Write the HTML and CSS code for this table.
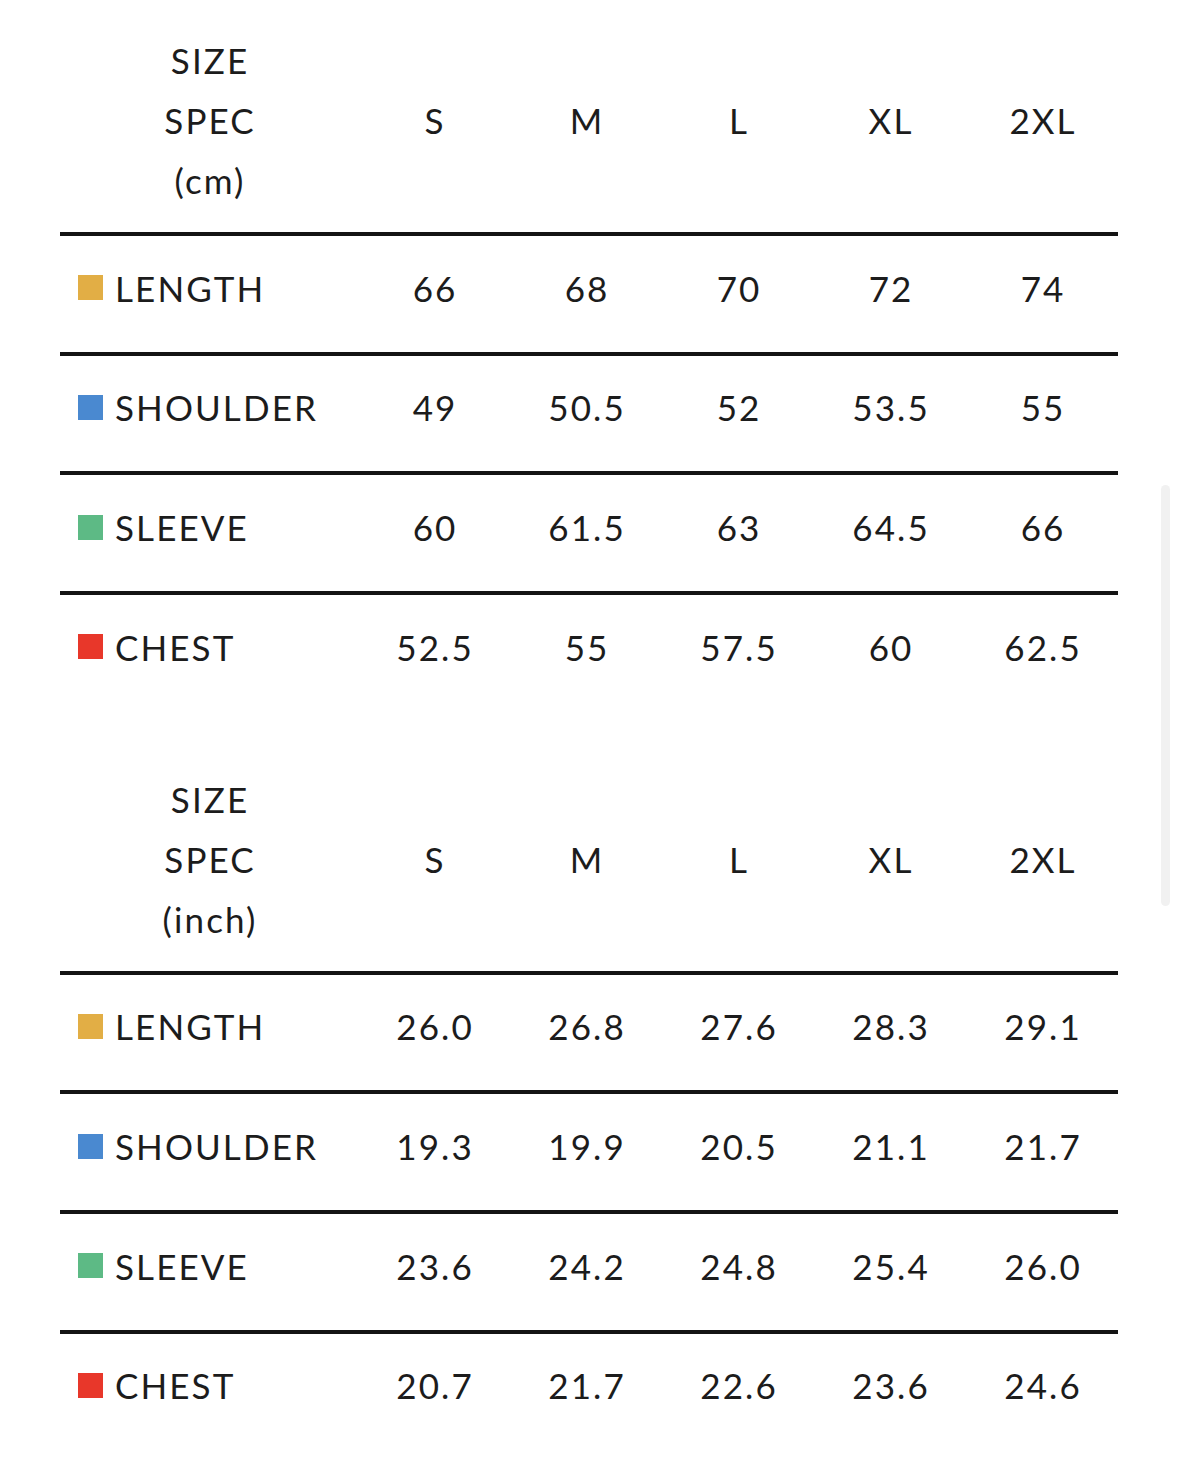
FILE: index.html
```html
<!DOCTYPE html>
<html>
<head>
<meta charset="utf-8">
<link rel="stylesheet" href="styles.css">
</head>
<body>
<div class="page">
  <section class="spec">
    <div class="head">
      <div class="label"><span>SIZE</span><span>SPEC</span><span>(cm)</span></div>
      <div class="c">S</div><div class="c">M</div><div class="c">L</div><div class="c">XL</div><div class="c">2XL</div>
    </div>
    <div class="row">
      <div class="name"><i class="sw yellow"></i>LENGTH</div>
      <div class="c">66</div><div class="c">68</div><div class="c">70</div><div class="c">72</div><div class="c">74</div>
    </div>
    <div class="row">
      <div class="name"><i class="sw blue"></i>SHOULDER</div>
      <div class="c">49</div><div class="c">50.5</div><div class="c">52</div><div class="c">53.5</div><div class="c">55</div>
    </div>
    <div class="row">
      <div class="name"><i class="sw green"></i>SLEEVE</div>
      <div class="c">60</div><div class="c">61.5</div><div class="c">63</div><div class="c">64.5</div><div class="c">66</div>
    </div>
    <div class="row">
      <div class="name"><i class="sw red"></i>CHEST</div>
      <div class="c">52.5</div><div class="c">55</div><div class="c">57.5</div><div class="c">60</div><div class="c">62.5</div>
    </div>
  </section>
  <section class="spec second">
    <div class="head">
      <div class="label"><span>SIZE</span><span>SPEC</span><span>(inch)</span></div>
      <div class="c">S</div><div class="c">M</div><div class="c">L</div><div class="c">XL</div><div class="c">2XL</div>
    </div>
    <div class="row">
      <div class="name"><i class="sw yellow"></i>LENGTH</div>
      <div class="c">26.0</div><div class="c">26.8</div><div class="c">27.6</div><div class="c">28.3</div><div class="c">29.1</div>
    </div>
    <div class="row">
      <div class="name"><i class="sw blue"></i>SHOULDER</div>
      <div class="c">19.3</div><div class="c">19.9</div><div class="c">20.5</div><div class="c">21.1</div><div class="c">21.7</div>
    </div>
    <div class="row">
      <div class="name"><i class="sw green"></i>SLEEVE</div>
      <div class="c">23.6</div><div class="c">24.2</div><div class="c">24.8</div><div class="c">25.4</div><div class="c">26.0</div>
    </div>
    <div class="row">
      <div class="name"><i class="sw red"></i>CHEST</div>
      <div class="c">20.7</div><div class="c">21.7</div><div class="c">22.6</div><div class="c">23.6</div><div class="c">24.6</div>
    </div>
  </section>
</div>
<div class="scrollbar"></div>
</body>
</html>
```

FILE: styles.css
```css
html, body {
  margin: 0;
  padding: 0;
  background: #ffffff;
}

body {
  font-family: "Lato", "Noto Sans", sans-serif;
  font-weight: 400;
  font-size: 35px;
  color: #1c1c1c;
  letter-spacing: 0.06em;
}

.page {
  width: 1058px;
  padding-left: 60px;
}

.spec {
  display: flex;
  flex-direction: column;
}

.spec.second {
  margin-top: 28px;
}

.head,
.row {
  display: grid;
  grid-template-columns: 298px repeat(5, 152px);
  align-items: center;
}

.head {
  box-sizing: border-box;
  height: 232px;
  padding: 30px 0 22px;
  line-height: 60px;
}

.label {
  display: flex;
  flex-direction: column;
  align-items: center;
  padding-left: 0.06em;
}

.c {
  text-align: center;
  padding-left: 0.06em;
}

.row {
  box-sizing: border-box;
  height: 119.67px;
  border-top: 4px solid #141414;
  padding-bottom: 12px;
  line-height: 42px;
}

.name {
  display: flex;
  align-items: center;
  gap: 12px;
  padding-left: 18px;
}

.sw {
  display: block;
  width: 25px;
  height: 25px;
  flex: none;
}

.yellow { background: #e2ae45; }
.blue { background: #4a89d0; }
.green { background: #5dba85; }
.red { background: #e8372a; }

.scrollbar {
  position: absolute;
  left: 1161px;
  top: 485px;
  width: 9px;
  height: 421px;
  border-radius: 5px;
  background: #f1f1f1;
}
```
